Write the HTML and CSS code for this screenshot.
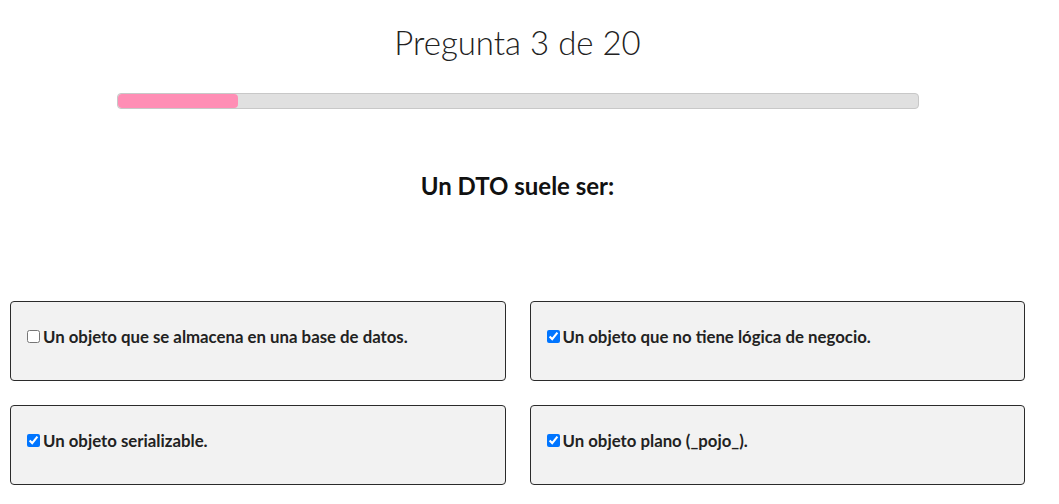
FILE: index.html
```html
<!DOCTYPE html>
<html lang="es">
<head>
<meta charset="utf-8">
<link rel="stylesheet" href="styles.css">
</head>
<body>
<main class="quiz">
  <h1 class="title">Pregunta 3 de 20</h1>
  <div class="progress"><div class="progress-fill" style="width:15%"></div></div>
  <h2 class="question">Un DTO suele ser:</h2>
  <div class="options">
    <label class="option"><input type="checkbox"><span>Un objeto que se almacena en una base de datos.</span></label>
    <label class="option"><input type="checkbox" checked><span>Un objeto que no tiene lógica de negocio.</span></label>
    <label class="option"><input type="checkbox" checked><span>Un objeto serializable.</span></label>
    <label class="option"><input type="checkbox" checked><span>Un objeto plano (_pojo_).</span></label>
  </div>
</main>
</body>
</html>
```
FILE: styles.css
```css
html, body {
  margin: 0;
  padding: 0;
  background: #fff;
}
body {
  font-family: Lato, "Open Sans", sans-serif;
  color: #222;
}
.quiz {
  width: 1035px;
  box-sizing: border-box;
  padding: 0 10px;
  display: flex;
  flex-direction: column;
  align-items: center;
}
.title {
  margin: 20px 0 0;
  font-weight: 300;
  font-size: 33px;
  line-height: 44px;
  color: #222;
}
.progress {
  margin-top: 29px;
  width: 802px;
  height: 16px;
  box-sizing: border-box;
  border: 1px solid #c8c8c8;
  border-radius: 4px;
  background: #e0e0e0;
  padding: 0;
  overflow: hidden;
}
.progress-fill {
  height: 100%;
  background: #ff8eb5;
  border-radius: 4px;
}
.question {
  margin: 62px 0 0;
  font-weight: 700;
  font-size: 24px;
  line-height: 30px;
  color: #111;
}
.options {
  margin-top: 100px;
  width: 100%;
  display: grid;
  grid-template-columns: 1fr 1fr;
  column-gap: 24px;
  row-gap: 24px;
}
.option {
  display: flex;
  align-items: center;
  height: 80px;
  box-sizing: border-box;
  border: 1px solid #2b2b2b;
  border-radius: 4px;
  background: #f2f2f2;
  padding: 0 16px 9px;
  font-weight: 700;
  font-size: 16.8px;
  color: #222;
}
.option input {
  margin: 0 3px 0 0;
  width: 13px;
  height: 13px;
}
```
